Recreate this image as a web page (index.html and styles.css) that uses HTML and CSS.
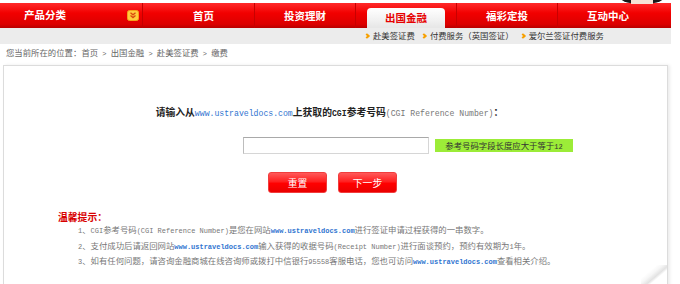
FILE: index.html
```html
<!DOCTYPE html>
<html lang="zh-CN">
<head>
  <meta charset="UTF-8">
  <title>出国金融 - 缴费</title>
  <link rel="stylesheet" href="styles.css">
</head>
<body>
  <!-- Header -->
  <div class="header">
    <div class="mascot"><span class="face"></span></div>

    <div class="nav">
      <div class="nav-category">
        <span>产品分类</span>
        <svg class="cat-icon" width="12" height="11" viewBox="0 0 12 11">
          <rect x="0.5" y="0.5" width="11" height="10" rx="2" fill="#ffcb3d" stroke="#f3a11a"/>
          <path d="M3.5 2.8 L6 4.8 L8.5 2.8 M3.5 5.6 L6 7.6 L8.5 5.6" fill="none" stroke="#d9480f" stroke-width="1.3"/>
        </svg>
      </div>
      <ul class="nav-menu">
        <li><a href="#">首页</a></li>
        <li><a href="#">投资理财</a></li>
        <li class="active"><a href="#">出国金融</a></li>
        <li><a href="#">福彩定投</a></li>
        <li><a href="#">互动中心</a></li>
      </ul>
    </div>

    <!-- Sub navigation -->
    <div class="subnav">
      <a href="#">赴美签证费</a>
      <a href="#">付费服务（英国签证）</a>
      <a href="#">爱尔兰签证付费服务</a>
    </div>
  </div>

  <!-- Breadcrumb -->
  <div class="crumbs">
    您当前所在的位置：<a href="#">首页</a><span class="en"> &gt; </span><a href="#">出国金融</a><span class="en"> &gt; </span><a href="#">赴美签证费</a><span class="en"> &gt; </span>缴费
  </div>

  <!-- Main panel -->
  <div class="panel">
    <h3 class="ask">请输入从<a class="url" href="#">www.ustraveldocs.com</a>上获取的<span class="en-b">CGI</span>参考号码<span class="en note">(CGI Reference Number)</span>：</h3>

    <div class="ref-row">
      <input type="text" class="ref-input">
      <span class="hint">参考号码字段长度应大于等于<span class="en">12</span></span>
    </div>

    <div class="actions">
      <button class="btn">重置</button>
      <button class="btn">下一步</button>
    </div>

    <div class="tips">
      <h4>温馨提示：</h4>
      <ol>
        <li><span class="en">1</span>、<span class="en">CGI</span>参考号码<span class="en">(CGI Reference Number)</span>是您在网站<a class="url bold" href="#">www.ustraveldocs.com</a>进行签证申请过程获得的一串数字。</li>
        <li><span class="en">2</span>、支付成功后请返回网站<a class="url bold" href="#">www.ustraveldocs.com</a>输入获得的收据号码<span class="en">(Receipt Number)</span>进行面谈预约，预约有效期为<span class="en">1</span>年。</li>
        <li><span class="en">3</span>、如有任何问题，请咨询金融商城在线咨询师或拨打中信银行<span class="en">95558</span>客服电话，您也可访问<a class="url bold" href="#">www.ustraveldocs.com</a>查看相关介绍。</li>
      </ol>
    </div>
  </div>
</body>
</html>
```

FILE: styles.css
```css
/* Global */
body {
  margin: 0;
  background: #fff;
  color: #666;
  font-family: "Noto Sans CJK SC", sans-serif;
  font-size: 8.4px;
  line-height: 1.4;
}

a {
  color: inherit;
  text-decoration: none;
}

/* half-width latin, like the old song-ti pages */
.en, .en-b, .url {
  font-family: "Liberation Mono", monospace;
  font-size: 0.833em;
}

.en-b {
  font-weight: bold;
}

/* Header */
.header {
  position: relative;
  width: 671px;
  padding-top: 3px;
}

.mascot {
  position: absolute;
  left: 621px;
  top: -7px;
  width: 42px;
  height: 11px;
  border-radius: 50%;
  background: #1a1a1a;
  display: flex;
  justify-content: center;
  align-items: flex-end;
}

.mascot .face {
  width: 22px;
  height: 8px;
  border-radius: 50% 50% 0 0;
  background: #f6e3d6;
}

.nav {
  display: flex;
  height: 25px;
  background: linear-gradient(#ff2a2a, #f20000 40%, #dc0000 85%, #b80000);
  color: #fff;
  font-size: 10.5px;
  font-weight: bold;
}

.nav-category {
  box-sizing: border-box;
  width: 143px;
  padding: 0 3px 0 24px;
  display: flex;
  align-items: center;
  justify-content: space-between;
  border-right: 1px solid #c40000;
}

.cat-icon {
  display: block;
}

.nav-menu {
  display: flex;
  margin: 0 0 0 10px;
  padding: 0;
  list-style: none;
}

.nav-menu li {
  width: 101px;
  text-align: center;
  line-height: 25px;
}

.nav-menu li + li {
  border-left: 1px solid #c80000;
  width: 100px;
}

.nav-menu li.active a {
  display: block;
  margin: 5px 11px 0;
  line-height: 20px;
  border-radius: 4px 4px 0 0;
  background: linear-gradient(#ffffff, #f1f1f1 60%, #e6e6e6);
  color: #e60000;
}

/* Sub navigation */
.subnav {
  display: flex;
  height: 16px;
  align-items: center;
  padding-left: 365px;
  background: #ececec;
  color: #333;
}

.subnav a {
  margin-right: 7px;
}

.subnav a::before {
  content: "";
  display: inline-block;
  width: 2px;
  height: 2px;
  margin: 0 4px 1px 0;
  border-top: 2px solid #f7a000;
  border-right: 2px solid #f7a000;
  transform: rotate(45deg);
}

/* Breadcrumb */
.crumbs {
  margin-top: 2px;
  padding-left: 6px;
  line-height: 12px;
  color: #666;
}

/* Main panel */
.panel {
  position: relative;
  width: 663px;
  height: 221px;
  margin: 5px 0 0 3px;
  border: 1px solid #dcdcdc;
  box-shadow: 2px 0 3px rgba(0, 0, 0, 0.08);
}

.panel::after {
  content: "";
  position: absolute;
  right: 0;
  bottom: 0;
  width: 26px;
  height: 22px;
  background: linear-gradient(to top left, #fff 0 38%, #e2e2e2 46%, #f6f6f6 58%, rgba(255, 255, 255, 0) 70%);
}

.ask {
  margin: 39px 0 0;
  padding-right: 12px;
  text-align: center;
  font-size: 9.8px;
  line-height: 14px;
  color: #222;
}

.url {
  color: #2f74d0;
  font-weight: normal;
}

.url.bold {
  font-weight: bold;
}

.note {
  font-weight: normal;
  color: #777;
}

.ref-row {
  display: flex;
  align-items: center;
  margin-top: 16px;
  padding-left: 239px;
}

.ref-input {
  box-sizing: border-box;
  width: 186px;
  height: 17px;
  margin: 0;
  border: 1px solid #d6d6d6;
  border-top-color: #a9a9a9;
  border-left-color: #bdbdbd;
}

.hint {
  width: 138px;
  height: 13px;
  margin-left: 6px;
  line-height: 13px;
  text-align: center;
  background: #9cec38;
  color: #333;
}

.actions {
  display: flex;
  justify-content: center;
  gap: 11px;
  margin-top: 18px;
  padding-right: 6px;
}

.btn {
  width: 59px;
  height: 21px;
  padding: 0;
  border: 1px solid #f13d3d;
  border-radius: 3px;
  background: linear-gradient(#ff5a5a, #ff2020 45%, #ff0000 55%, #ea0000);
  color: #fff;
  font-family: "Noto Sans CJK SC", sans-serif;
  font-size: 9.8px;
  cursor: pointer;
}

/* Tips */
.tips {
  margin-top: 18px;
  padding-left: 54px;
}

.tips h4 {
  margin: 0;
  font-size: 9.8px;
  line-height: 12px;
  color: #d80000;
}

.tips ol {
  margin: 0;
  padding-left: 20px;
  list-style: none;
  color: #777;
}

.tips li {
  line-height: 13.5px;
}
```
